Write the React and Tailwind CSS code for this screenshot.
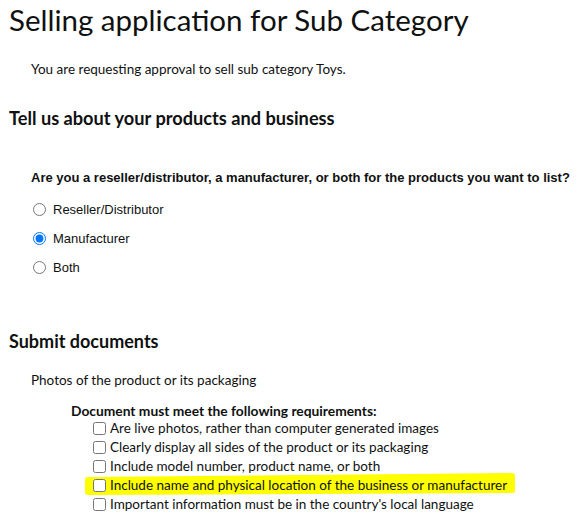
import { useState } from "react";

const roles = ["Reseller/Distributor", "Manufacturer", "Both"];

const reqs = [
  "Are live photos, rather than computer generated images",
  "Clearly display all sides of the product or its packaging",
  "Include model number, product name, or both",
  "Include name and physical location of the business or manufacturer",
  "Important information must be in the country's local language",
];

function Highlight() {
  // yellow marker stroke drawn over the screenshot
  return (
    <svg className="absolute left-[-8px] top-[-3px] w-[430px] h-[23px]" viewBox="0 0 430 23" preserveAspectRatio="none">
      <path d="M3 4 L427 0 Q430 0 430 3 L430 18 Q430 20 427 20 L3 22 Q0 22 0 19 L0 7 Q0 4 3 4 Z" fill="#ffff00" />
    </svg>
  );
}

export default function App() {
  const [role, setRole] = useState("Manufacturer");
  const [checked, setChecked] = useState([]);

  function toggle(i) {
    setChecked(checked.includes(i) ? checked.filter((c) => c !== i) : [...checked, i]);
  }

  return (
    <div className="w-[579px] h-[524px] bg-white text-[#0f1111] overflow-hidden font-[Lato,sans-serif]">
      <h1 className="pl-[9px] text-[29.5px] leading-[40px]">Selling application for Sub Category</h1>
      <p className="pl-[31px] mt-[19px] text-[13.5px] leading-[20px]">You are requesting approval to sell sub category Toys.</p>

      <h2 className="pl-[9px] mt-[27px] text-[18.2px] leading-[24px] font-bold">Tell us about your products and business</h2>
      <div className="font-['Liberation_Sans',Arial,sans-serif]">
        <p className="pl-[31px] mt-[38px] text-[13px] leading-[20px] font-bold">
          Are you a reseller/distributor, a manufacturer, or both for the products you want to list?
        </p>
        <div className="mt-[7px] pl-[33px] flex flex-col">
          {roles.map((r) => (
            <label key={r} className="flex items-center gap-[7px] h-[29px] text-[13px]">
              <input type="radio" name="role" className="m-0 w-[13px] h-[13px] accent-[#0075ff]" checked={role === r} onChange={() => setRole(r)} />
              {r}
            </label>
          ))}
        </div>
      </div>

      <h2 className="pl-[9px] mt-[47px] text-[18px] leading-[24px] font-bold">Submit documents</h2>
      <p className="pl-[31px] mt-[17px] text-[13.5px] leading-[20px]">Photos of the product or its packaging</p>
      <p className="pl-[71px] mt-[13px] text-[13.8px] leading-[16px] font-bold">Document must meet the following requirements:</p>
      <ul className="pl-[93px]">
        {reqs.map((t, i) => (
          <li key={t} className="relative flex items-center h-[19px]">
            {i === 3 ? <Highlight /> : null}
            <label className="relative flex items-center gap-[4px] text-[13.5px]">
              <input type="checkbox" className="m-0 w-[13px] h-[13px]" checked={checked.includes(i)} onChange={() => toggle(i)} />
              {t}
            </label>
          </li>
        ))}
      </ul>
    </div>
  );
}
